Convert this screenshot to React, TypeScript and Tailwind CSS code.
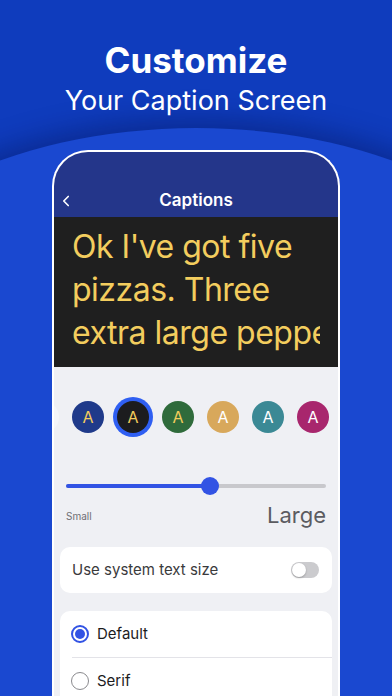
import { ChevronLeft } from 'lucide-react';

const swatches = [
  { bg: 'bg-[#f4f5f8]', fg: 'text-[#1f3c8c]', selected: false },
  { bg: 'bg-[#1f3a8a]', fg: 'text-[#f2cd5c]', selected: false },
  { bg: 'bg-[#1c1c1e]', fg: 'text-[#f2cd5c]', selected: true },
  { bg: 'bg-[#2f6b3b]', fg: 'text-[#f2cd5c]', selected: false },
  { bg: 'bg-[#d8a85b]', fg: 'text-white', selected: false },
  { bg: 'bg-[#3b8995]', fg: 'text-white', selected: false },
  { bg: 'bg-[#a8266d]', fg: 'text-white', selected: false },
];

const captionLines = ["Ok I've got five", 'pizzas. Three', 'extra large pepperoni'];

function Swatch({ bg, fg, selected }: { bg: string; fg: string; selected: boolean }) {
  return (
    <div
      className={`flex h-8 w-8 shrink-0 items-center justify-center rounded-full text-[16px] ${bg} ${fg} ${
        selected ? 'ring-4 ring-[#2f5ff2]' : ''
      }`}
    >
      A
    </div>
  );
}

export default function App() {
  return (
    <div className="relative h-[696px] w-full overflow-hidden bg-[#0f3cbd] font-['Inter',sans-serif]">
      <div className="absolute left-[-154px] top-[128px] h-[1000px] w-[700px] rounded-[350px/190px] bg-[#1a48d0] shadow-[0_-8px_28px_rgba(5,20,90,0.45)]" />

      <div className="relative flex flex-col items-center pt-[38px] text-white">
        <h1 className="text-[35px] font-bold leading-[44px]">Customize</h1>
        <p className="mt-px text-[27px] leading-[36px]">Your Caption Screen</p>
      </div>

      <div className="relative mx-auto mt-[31px] w-[288px] overflow-hidden rounded-t-[36px] border-2 border-b-0 border-white bg-[#eff0f4]">
        <div className="bg-[#24368a] pt-[33px]">
          <div className="relative flex h-[32px] items-center justify-center">
            <ChevronLeft className="absolute left-[3px] h-[18px] w-[18px] text-white" strokeWidth={2.2} />
            <span className="text-[17px] font-semibold text-white">Captions</span>
          </div>
        </div>

        <div className="overflow-hidden bg-[#1f1f1f] pb-[13px] pl-[18px] pr-[18px] pt-[8px]">
          <div className="overflow-hidden">
            {captionLines.map((line) => (
              <div
                key={line}
                className="whitespace-nowrap text-[32px] leading-[43px] tracking-[-0.5px] text-[#f3cd5e]"
              >
                {line}
              </div>
            ))}
          </div>
        </div>

        <div className="ml-[-27px] mt-[34px] flex gap-[13px]">
          {swatches.map((s, i) => (
            <Swatch key={i} {...s} />
          ))}
        </div>

        <div className="mt-[51px] px-[12px]">
          <div className="relative h-[4px] rounded-full bg-[#c8c8cc]">
            <div className="h-full w-[55.4%] rounded-full bg-[#3253e4]" />
            <div className="absolute left-[55.4%] top-1/2 h-[18px] w-[18px] -translate-x-1/2 -translate-y-1/2 rounded-full bg-[#3253e4]" />
          </div>
          <div className="mt-[14px] flex items-end justify-between">
            <span className="mb-[4px] text-[10px] text-[#6e6e73]">Small</span>
            <span className="text-[22px] leading-[26px] text-[#5b5b60]">Large</span>
          </div>
        </div>

        <div className="mx-[6px] mt-[19px] flex h-[46px] items-center justify-between rounded-[10px] bg-white pl-[12px] pr-[13px]">
          <span className="text-[15px] text-[#3a3a3c]">Use system text size</span>
          <div className="flex h-[16px] w-[28px] items-center rounded-full bg-[#cbcbce] p-px">
            <div className="h-[14px] w-[14px] rounded-full bg-white shadow-[0_1px_2px_rgba(0,0,0,0.25)]" />
          </div>
        </div>

        <div className="mx-[6px] mt-[18px] rounded-t-[10px] bg-white pb-[20px]">
          <div className="flex h-[46px] items-center gap-[8px] pl-[11px]">
            <div className="flex h-[18px] w-[18px] items-center justify-center rounded-full border-2 border-[#3253e4]">
              <div className="h-[10px] w-[10px] rounded-full bg-[#3253e4]" />
            </div>
            <span className="text-[15px] text-[#1c1c1e]">Default</span>
          </div>
          <div className="ml-[12px] h-px bg-[#e3e3e8]" />
          <div className="flex h-[46px] items-center gap-[8px] pl-[11px]">
            <div className="h-[18px] w-[18px] rounded-full border-[1.5px] border-[#8a8a8e]" />
            <span className="text-[15px] text-[#1c1c1e]">Serif</span>
          </div>
        </div>
      </div>
    </div>
  );
}
